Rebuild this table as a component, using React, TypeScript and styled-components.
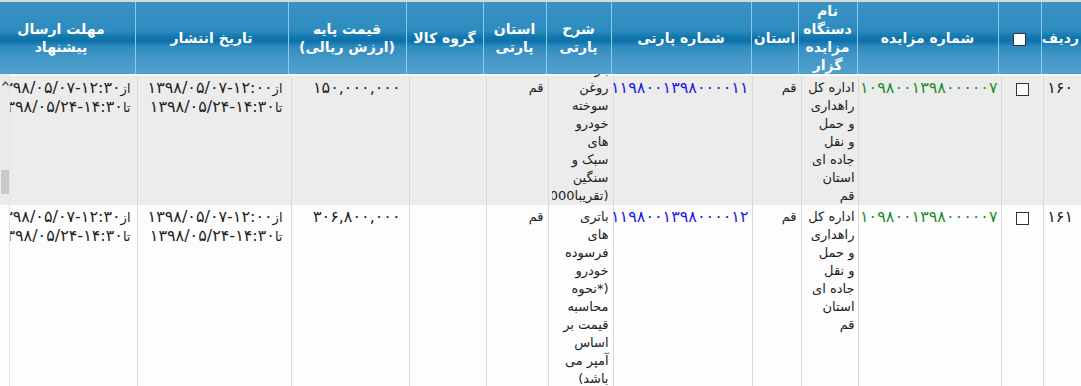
import styled, { createGlobalStyle } from "styled-components";

const GlobalStyle = createGlobalStyle`
  html, body {
    margin: 0;
    padding: 0;
    background: #fff;
  }
  body {
    font-family: "DejaVu Sans", Tahoma, sans-serif;
  }
`;

const Grid = styled.div`
  direction: rtl;
  width: 1081px;
  height: 386px;
  overflow: hidden;
  background: #fff;
  font-family: "DejaVu Sans", Tahoma, sans-serif;
`;

const HeaderWrap = styled.div`
  overflow: hidden;
  border-top: 2px solid #d7d7d7;
`;

const Table = styled.table<{ $width: number }>`
  width: ${(p) => p.$width}px;
  table-layout: fixed;
  border-collapse: collapse;
  border-spacing: 0;
`;

const Col = styled.col<{ $w: number }>`
  width: ${(p) => p.$w}px;
`;

const HeadCell = styled.th`
  height: 72px;
  padding: 0 2px;
  background: linear-gradient(
    to bottom,
    #3893c4 0%,
    #2d8bbf 40%,
    #1278ae 48%,
    #0c70a8 54%,
    #2f8bbf 62%,
    #4699c8 80%,
    #4fa0cc 100%
  );
  color: #fff;
  font-size: 14px;
  font-weight: bold;
  line-height: 18px;
  text-align: center;
  vertical-align: middle;
  white-space: nowrap;
  border-left: 1px solid #8bcbec;
`;

const BodyWrap = styled.div`
  display: flex;
  height: 312px;
`;

const BodyScroll = styled.div`
  flex: 1;
  min-width: 0;
  overflow: hidden;
  padding-top: 2px;
`;

const Row = styled.tr<{ $shade?: boolean }>`
  background: ${(p) => (p.$shade ? "#ececec" : "#fdfdfd")};
`;

const Cell = styled.td<{ $tone?: "green" | "blue"; $inset?: number }>`
  padding: 3px ${(p) => p.$inset ?? 4}px 0 3px;
  vertical-align: top;
  text-align: right;
  font-size: 13px;
  line-height: 18px;
  white-space: nowrap;
  color: ${(p) =>
    p.$tone === "green" ? "#1e8c1e" : p.$tone === "blue" ? "#1818ee" : "#222"};
  border-left: 1px solid #dadada;
`;

const CheckCell = styled(Cell)`
  text-align: center;
  padding-right: 0;
  padding-left: 0;
`;

// persian digits in DejaVu run narrower than Tahoma's, letter-spacing is ignored for arabic script
const Num = styled.span`
  font-size: 16px;
  line-height: 18px;
`;

const Check = styled.span<{ $head?: boolean }>`
  display: inline-block;
  width: 11px;
  height: 11px;
  margin-top: ${(p) => (p.$head ? 0 : 2)}px;
  border: 1px solid #333;
  background: #fff;
  vertical-align: middle;
`;

const Clip = styled.div<{ $lift: number; $lines: number }>`
  margin-top: -${(p) => p.$lift}px;
  height: ${(p) => p.$lines * 18}px;
  overflow: hidden;
`;

const Scrollbar = styled.div`
  flex: none;
  width: 9px;
  display: flex;
  flex-direction: column;
  align-items: flex-start;
  padding-top: 7px;
  background: linear-gradient(to bottom, #ebebeb 0 131px, #fdfdfd 131px);
  border-right: 1px solid #e4e4e4;
`;

const Arrow = styled.svg`
  margin-left: 1px;
`;

const Thumb = styled.div`
  margin-top: 84px;
  width: 8px;
  height: 24px;
  background: #c9c9c9;
`;

const headWidths = [40, 43, 141, 59, 47, 140, 65, 63, 77, 118, 153, 148];
const bodyWidths = [38, 42, 143, 57, 49, 139, 65, 62, 77, 118, 154, 140];
const sum = (a: number[]) => a.reduce((s, n) => s + n, 0);

const headers: string[][] = [
  ["ردیف"],
  [],
  ["شماره مزایده"],
  ["نام", "دستگاه", "مزایده", "گزار"],
  ["استان"],
  ["شماره پارتی"],
  ["شرح", "پارتی"],
  ["استان", "پارتی"],
  ["گروه کالا"],
  ["قیمت پایه", "(ارزش ریالی)"],
  ["تاریخ انتشار"],
  ["مهلت ارسال", "پیشنهاد"],
];

// [prefix, date-time]
type Stamp = [string, string];

type Lot = {
  idx: string;
  auction: string;
  org: string[];
  province: string;
  party: string;
  desc: string[];
  lift?: number;
  partyProvince: string;
  group: string;
  price: string;
  publish: Stamp[];
  deadline: Stamp[];
  shade?: boolean;
};

const org = ["اداره کل", "راهداری", "و حمل", "و نقل", "جاده ای", "استان", "قم"];

const lots: Lot[] = [
  {
    idx: "۱۶۰",
    auction: "۱۰۹۸۰۰۱۳۹۸۰۰۰۰۰۷",
    org,
    province: "قم",
    party: "۱۱۹۸۰۰۱۳۹۸۰۰۰۰۱۱",
    desc: ["بار", "روغن", "سوخته", "خودرو", "های", "سبک و", "سنگین", "(تقریبا10000", "لیتر)"],
    lift: 18,
    partyProvince: "قم",
    group: "",
    price: "۱۵۰,۰۰۰,۰۰۰",
    publish: [
      ["از", "۱۲:۰۰-۱۳۹۸/۰۵/۰۷"],
      ["تا", "۱۴:۳۰-۱۳۹۸/۰۵/۲۴"],
    ],
    deadline: [
      ["از", "۱۲:۳۰-۱۳۹۸/۰۵/۰۷"],
      ["تا", "۱۴:۳۰-۱۳۹۸/۰۵/۲۴"],
    ],
    shade: true,
  },
  {
    idx: "۱۶۱",
    auction: "۱۰۹۸۰۰۱۳۹۸۰۰۰۰۰۷",
    org,
    province: "قم",
    party: "۱۱۹۸۰۰۱۳۹۸۰۰۰۰۱۲",
    desc: [
      "باتری",
      "های",
      "فرسوده",
      "خودرو",
      "(*نحوه",
      "محاسبه",
      "قیمت بر",
      "اساس",
      "آمپر می",
      "باشد)",
    ],
    partyProvince: "قم",
    group: "",
    price: "۳۰۶,۸۰۰,۰۰۰",
    publish: [
      ["از", "۱۲:۰۰-۱۳۹۸/۰۵/۰۷"],
      ["تا", "۱۴:۳۰-۱۳۹۸/۰۵/۲۴"],
    ],
    deadline: [
      ["از", "۱۲:۳۰-۱۳۹۸/۰۵/۰۷"],
      ["تا", "۱۴:۳۰-۱۳۹۸/۰۵/۲۴"],
    ],
  },
];

const Lines = ({ items }: { items: string[] }) => (
  <>
    {items.map((t, i) => (
      <div key={i}>{t}</div>
    ))}
  </>
);

const Stamps = ({ items }: { items: Stamp[] }) => (
  <>
    {items.map(([pre, when], i) => (
      <div key={i}>
        {pre}
        <Num>{when}</Num>
      </div>
    ))}
  </>
);

const App = () => {
  return (
    <Grid>
      <GlobalStyle />
      <HeaderWrap>
        <Table $width={sum(headWidths)}>
          <colgroup>
            {headWidths.map((w, i) => (
              <Col key={i} $w={w} />
            ))}
          </colgroup>
          <thead>
            <tr>
              {headers.map((h, i) => (
                <HeadCell key={i}>
                  {i === 1 ? <Check $head /> : <Lines items={h} />}
                </HeadCell>
              ))}
            </tr>
          </thead>
        </Table>
      </HeaderWrap>

      <BodyWrap>
        <BodyScroll>
          <Table $width={sum(bodyWidths)}>
            <colgroup>
              {bodyWidths.map((w, i) => (
                <Col key={i} $w={w} />
              ))}
            </colgroup>
            <tbody>
              {lots.map((lot) => (
                <Row key={lot.idx} $shade={lot.shade}>
                  <Cell $inset={8}>
                    <Num>{lot.idx}</Num>
                  </Cell>
                  <CheckCell>
                    <Check />
                  </CheckCell>
                  <Cell $tone="green" $inset={3}>
                    <Num>{lot.auction}</Num>
                  </Cell>
                  <Cell $inset={3}>
                    <Lines items={lot.org} />
                  </Cell>
                  <Cell>{lot.province}</Cell>
                  <Cell $tone="blue" $inset={3}>
                    <Num>{lot.party}</Num>
                  </Cell>
                  <Cell>
                    {lot.lift ? (
                      <Clip $lift={lot.lift} $lines={8}>
                        <Lines items={lot.desc} />
                      </Clip>
                    ) : (
                      <Lines items={lot.desc} />
                    )}
                  </Cell>
                  <Cell>{lot.partyProvince}</Cell>
                  <Cell>{lot.group}</Cell>
                  <Cell $inset={8}>
                    <Num>{lot.price}</Num>
                  </Cell>
                  <Cell $inset={8}>
                    <Stamps items={lot.publish} />
                  </Cell>
                  <Cell $inset={6}>
                    <Stamps items={lot.deadline} />
                  </Cell>
                </Row>
              ))}
            </tbody>
          </Table>
        </BodyScroll>
        <Scrollbar>
          <Arrow width="7" height="5" viewBox="0 0 7 5">
            <polyline points="0.5,4.5 3.5,1 6.5,4.5" fill="none" stroke="#4a4a4a" strokeWidth="1.3" />
          </Arrow>
          <Thumb />
        </Scrollbar>
      </BodyWrap>
    </Grid>
  );
};

export default App;
